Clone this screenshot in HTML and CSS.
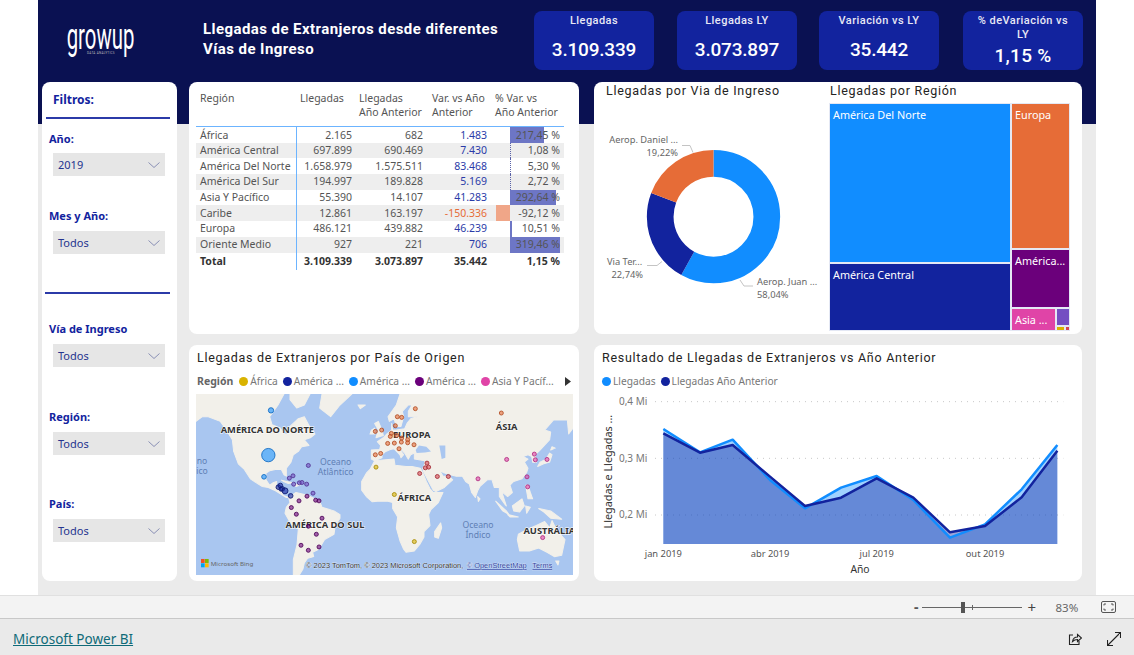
FILE: index.html
```html
<!DOCTYPE html>
<html lang="es">
<head>
<meta charset="utf-8">
<title>Llegadas de Extranjeros</title>
<link rel="stylesheet" href="styles.css">
</head>
<body>
<div class="app">
  <main class="report">
    <header class="top">
      <div class="logo">
        <span class="logo-word">growup</span>
        <span class="logo-sub">DATA ANALYTICS</span>
      </div>
      <h1 class="main-title">Llegadas de Extranjeros desde diferentes<br>Vías de Ingreso</h1>
      <div class="kpis">
        <div class="kpi"><div class="kpi-label">Llegadas</div><div class="kpi-value">3.109.339</div></div>
        <div class="kpi"><div class="kpi-label">Llegadas LY</div><div class="kpi-value">3.073.897</div></div>
        <div class="kpi"><div class="kpi-label">Variación vs LY</div><div class="kpi-value">35.442</div></div>
        <div class="kpi kpi-long"><div class="kpi-label">% deVariación vs LY</div><div class="kpi-value">1,15 %</div></div>
      </div>
    </header>
    <div class="board">
      <aside class="panel filters">
        <div class="f-title">Filtros:</div>
        <div class="f-rule"></div>
        <div class="f-group f-first"><div class="f-label">Año:</div><div class="f-select"><span>2019</span><svg class="chev" viewBox="0 0 12 6"><path d="M.5.5 6 5.5 11.5.5"/></svg></div></div>
        <div class="f-group f-near"><div class="f-label">Mes y Año:</div><div class="f-select"><span>Todos</span><svg class="chev" viewBox="0 0 12 6"><path d="M.5.5 6 5.5 11.5.5"/></svg></div></div>
        <div class="f-rule f-rule2"></div>
        <div class="f-group f-after"><div class="f-label">Vía de Ingreso</div><div class="f-select"><span>Todos</span><svg class="chev" viewBox="0 0 12 6"><path d="M.5.5 6 5.5 11.5.5"/></svg></div></div>
        <div class="f-group f-far"><div class="f-label">Región:</div><div class="f-select"><span>Todos</span><svg class="chev" viewBox="0 0 12 6"><path d="M.5.5 6 5.5 11.5.5"/></svg></div></div>
        <div class="f-group f-far2"><div class="f-label">País:</div><div class="f-select"><span>Todos</span><svg class="chev" viewBox="0 0 12 6"><path d="M.5.5 6 5.5 11.5.5"/></svg></div></div>
      </aside>

      <section class="panel table-panel">
        <table class="data">
          <colgroup><col class="c1"><col class="c2"><col class="c3"><col class="c4"><col class="c5"></colgroup>
          <thead>
            <tr><th class="tl">Región</th><th>Llegadas</th><th>Llegadas<br>Año Anterior</th><th>Var. vs Año<br>Anterior</th><th>% Var. vs<br>Año Anterior</th></tr>
          </thead>
          <tbody>
            <tr><td class="tl">África</td><td>2.165</td><td>682</td><td class="pos">1.483</td><td class="pct"><i class="axis"></i><i class="bar" style="width:34px"></i><span>217,45 %</span></td></tr>
            <tr><td class="tl">América Central</td><td>697.899</td><td>690.469</td><td class="pos">7.430</td><td class="pct"><i class="axis"></i><span>1,08 %</span></td></tr>
            <tr><td class="tl">América Del Norte</td><td>1.658.979</td><td>1.575.511</td><td class="pos">83.468</td><td class="pct"><i class="axis"></i><span>5,30 %</span></td></tr>
            <tr><td class="tl">América Del Sur</td><td>194.997</td><td>189.828</td><td class="pos">5.169</td><td class="pct"><i class="axis"></i><span>2,72 %</span></td></tr>
            <tr><td class="tl">Asia Y Pacífico</td><td>55.390</td><td>14.107</td><td class="pos">41.283</td><td class="pct"><i class="axis"></i><i class="bar" style="width:46px"></i><span>292,64 %</span></td></tr>
            <tr><td class="tl">Caribe</td><td>12.861</td><td>163.197</td><td class="neg">-150.336</td><td class="pct"><i class="bar-neg"></i><span>-92,12 %</span></td></tr>
            <tr><td class="tl">Europa</td><td>486.121</td><td>439.882</td><td class="pos">46.239</td><td class="pct"><i class="axis"></i><i class="bar" style="width:2px"></i><span>10,51 %</span></td></tr>
            <tr><td class="tl">Oriente Medio</td><td>927</td><td>221</td><td class="pos">706</td><td class="pct"><i class="axis"></i><i class="bar" style="width:50px"></i><span>319,46 %</span></td></tr>
          </tbody>
          <tfoot>
            <tr><td class="tl">Total</td><td>3.109.339</td><td>3.073.897</td><td>35.442</td><td>1,15 %</td></tr>
          </tfoot>
        </table>
      </section>

      <section class="panel split-panel">
        <div class="donut-col">
          <h2 class="v-title">Llegadas por Via de Ingreso</h2>
          <svg class="donut" viewBox="594 100 235 234">
            <g class="donut-ring" fill="none" stroke-width="26.7">
              <circle cx="713.5" cy="216.7" r="53.3" pathLength="100" stroke="#118dff" stroke-dasharray="58.04 41.96" transform="rotate(-90 713.5 216.7)"/>
              <circle cx="713.5" cy="216.7" r="53.3" pathLength="100" stroke="#12239e" stroke-dasharray="22.74 77.26" stroke-dashoffset="-58.04" transform="rotate(-90 713.5 216.7)"/>
              <circle cx="713.5" cy="216.7" r="53.3" pathLength="100" stroke="#e66c37" stroke-dasharray="19.22 80.78" stroke-dashoffset="-80.78" transform="rotate(-90 713.5 216.7)"/>
            </g>
            <g fill="none" stroke="#c4c4c4">
              <path d="M682 145.5h8l3 7"/><path d="M647 265.5h10l5-4"/><path d="M740 280l4 6h9"/>
            </g>
            <g class="d-label">
              <text x="678" y="143" text-anchor="end">Aerop. Daniel ...</text>
              <text x="678" y="156" text-anchor="end">19,22%</text>
              <text x="607" y="265">Via Ter...</text>
              <text x="643" y="278" text-anchor="end">22,74%</text>
              <text x="757" y="285">Aerop. Juan ...</text>
              <text x="757" y="298">58,04%</text>
            </g>
          </svg>
        </div>
        <div class="tree-col">
          <h2 class="v-title tree-title">Llegadas por Región</h2>
          <div class="tree">
            <div class="tree-left">
              <div class="t-cell t-blue t-a">América Del Norte</div>
              <div class="t-cell t-navy t-b">América Central</div>
            </div>
            <div class="tree-right">
              <div class="t-cell t-orange t-c">Europa</div>
              <div class="t-cell t-purple t-d">América...</div>
              <div class="tree-bottom">
                <div class="t-cell t-pink t-e">Asia ...</div>
                <div class="tree-tiny">
                  <div class="t-cell t-violet t-f"></div>
                  <div class="tree-tinier"><div class="t-cell t-yellow t-g"></div><div class="t-cell t-red t-h"></div></div>
                </div>
              </div>
            </div>
          </div>
        </div>
      </section>

      <section class="panel map-panel">
        <h2 class="v-title">Llegadas de Extranjeros por País de Origen</h2>
        <div class="legend map-legend">
          <b class="leg-head">Región</b>
          <span class="leg"><i class="dot d-yellow"></i>África</span>
          <span class="leg"><i class="dot d-navy"></i>América ...</span>
          <span class="leg"><i class="dot d-blue"></i>América ...</span>
          <span class="leg"><i class="dot d-purple"></i>América ...</span>
          <span class="leg"><i class="dot d-pink"></i>Asia Y Pacíf...</span>
          <svg class="leg-arrow" viewBox="0 0 6 9"><path d="M0 0l6 4.500-6 4.500z"/></svg>
        </div>
        <svg class="map" viewBox="18 148 1131 542" preserveAspectRatio="none">
          <rect x="18" y="148" width="1131" height="542" fill="#a9c6f0"/>
          <g class="land">
            <path d="M18 148V230L37 216 55 216 91 230 109 256 127 285 131 320 145 357 163 374 181 402 199 414 217 425 235 428 253 436 271 447 289 458 296 458 278 451 278 432 260 428 260 410 249 414 239 421 228 405 228 385 239 378 256 374 274 374 282 390 289 394 289 370 303 352 310 330 325 320 335 306 357 302 343 285 361 279 375 268 361 250 343 216 325 222 300 245 292 268 282 268 271 250 246 240 239 216 264 181 282 148Z"/>
            <path d="M300 148H360L343 181 320 190 300 165Z"/>
            <path d="M396 148 389 190 422 216 450 181 486 148Z"/>
            <path d="M504 181 526 181 511 192Z"/>
            <path d="M274 406 307 414 295 416 282 411Z"/>
            <path d="M314 418 332 420 318 425Z"/>
            <path d="M296 458 318 443 353 451 389 469 396 487 432 498 450 509 450 520 436 542 432 568 404 584 386 613 368 622 371 635 353 640 343 654 339 672 328 690H310V644L321 600 325 552 303 537 285 505 289 487 300 473Z"/>
            <path d="M630 148 619 181 594 216 598 230 612 222 619 245 633 245 641 216 637 200 655 181 666 181 655 200 655 216 684 216 662 222 651 236 644 252 619 256 608 256 605 236 605 256 590 268 580 279 562 291 572 302 569 314 544 316 544 343 554 348 576 339 576 330 587 320 601 314 612 312 630 330 633 339 641 330 623 306 630 310 644 325 655 343 662 330 673 325 673 343 687 345 705 348 702 365 698 370 702 383 716 410 730 436 738 440 763 428 788 405 777 394 759 394 748 374 759 383 781 390 799 394 817 394 827 410 838 418 845 443 856 458 863 438 870 425 892 405 906 405 913 428 928 428 928 455 946 480 949 483 935 440 953 455 967 443 960 421 971 410 996 402 1010 383 1014 370 1003 352 1014 343 999 335 1014 330 1025 335 1028 352 1039 352 1035 330 1050 316 1079 285 1082 262 1064 256 1090 226 1132 226 1136 268 1149 250V148Z"/>
            <path d="M554 348 612 343 615 361 648 365 666 365 691 370 698 383 709 410 720 432 730 443 759 443 745 473 723 494 716 509 720 542 702 560 702 576 691 596 673 618 648 622 641 613 630 588 619 549 623 516 608 491 608 473 594 469 562 469 547 471 529 455 515 436 515 410 529 385 540 374Z"/>
            <path d="M734 560 752 534 755 549 745 580 734 576Z"/>
            <path d="M558 279 580 272 576 256 565 230 554 236 565 256Z"/>
            <path d="M540 268 554 268 554 250 544 256Z"/>
            <path d="M1043 365 1061 357 1079 352 1086 330 1079 325 1068 343 1050 352Z"/>
            <path d="M1082 316 1096 310 1086 306Z"/>
            <path d="M1007 421 1014 421 1021 443 1028 462 1014 462 1010 440Z"/>
            <path d="M967 483 996 462 1003 483 989 501 971 498Z"/>
            <path d="M917 469 949 498 957 509 938 498Z"/>
            <path d="M953 509 985 516 960 516Z"/>
            <path d="M1007 483 1021 487 1010 505Z"/>
            <path d="M1046 491 1082 498 1115 523 1082 520 1061 501Z"/>
            <path d="M863 455 870 462 865 470Z"/>
            <path d="M985 568 1014 552 1039 542 1064 530 1079 549 1086 527 1100 556 1125 584 1115 631 1093 635 1071 622 1046 609 1018 618 989 618 982 584Z"/>
            <path d="M1097 648 1107 648 1104 660Z"/>
          </g>
          <g class="inland">
            <path d="M677 316 687 302 709 306 723 320 705 323 680 325Z"/>
            <path d="M748 302 766 302 766 339 755 343 752 325Z"/>
          </g>
          <g class="map-region">
            <text x="232" y="265">AMÉRICA DO NORTE</text>
            <text x="665" y="280">EUROPA</text>
            <text x="950" y="255">ÁSIA</text>
            <text x="673" y="468">ÁFRICA</text>
            <text x="405" y="548">AMÉRICA DO SUL</text>
            <text x="1078" y="568">AUSTRÁLIA</text>
          </g>
          <g class="map-ocean">
            <text x="437" y="362">Oceano</text>
            <text x="437" y="392">Atlântico</text>
            <text x="864" y="550">Oceano</text>
            <text x="864" y="580">Índico</text>
            <text x="36" y="358">no</text>
            <text x="36" y="388">ico</text>
          </g>
          <g class="pts p-orange">
            <circle cx="676" cy="192" r="6"/><circle cx="622" cy="216" r="6"/><circle cx="635" cy="218" r="6"/><circle cx="616" cy="243" r="6"/><circle cx="556" cy="260" r="6"/><circle cx="575" cy="256" r="6"/><circle cx="604" cy="266" r="6"/><circle cx="601" cy="275" r="6"/><circle cx="620" cy="272" r="6"/><circle cx="635" cy="280" r="6"/><circle cx="653" cy="285" r="6"/><circle cx="634" cy="292" r="6"/><circle cx="653" cy="294" r="6"/><circle cx="593" cy="296" r="6"/><circle cx="613" cy="295" r="6"/><circle cx="672" cy="300" r="6"/><circle cx="627" cy="312" r="6"/><circle cx="556" cy="330" r="6"/><circle cx="572" cy="326" r="6"/><circle cx="934" cy="205" r="6"/>
          </g>
          <g class="pts p-red">
            <circle cx="711" cy="355" r="6"/><circle cx="706" cy="369" r="6"/><circle cx="716" cy="367" r="6"/><circle cx="689" cy="386" r="6"/><circle cx="742" cy="395" r="6"/><circle cx="775" cy="395" r="6"/>
          </g>
          <g class="pts p-pink">
            <circle cx="950" cy="344" r="6"/><circle cx="1033" cy="328" r="6"/><circle cx="1036" cy="345" r="6"/><circle cx="1071" cy="344" r="6"/><circle cx="1011" cy="396" r="6"/><circle cx="1013" cy="426" r="6"/><circle cx="864" cy="402" r="6"/><circle cx="1058" cy="578" r="6"/>
          </g>
          <g class="pts p-yellow">
            <circle cx="558" cy="367" r="6"/><circle cx="613" cy="449" r="6"/><circle cx="673" cy="590" r="6"/>
          </g>
          <g class="pts p-blue">
            <circle cx="243" cy="197" r="8"/><circle cx="235" cy="331" r="20"/><circle cx="222" cy="396" r="7"/>
          </g>
          <g class="pts p-violet">
            <circle cx="355" cy="362" r="6"/><circle cx="298" cy="400" r="6"/><circle cx="309" cy="393" r="6"/><circle cx="311" cy="418" r="6"/><circle cx="328" cy="414" r="6"/><circle cx="336" cy="413" r="6"/><circle cx="350" cy="418" r="6"/><circle cx="369" cy="445" r="6"/>
          </g>
          <g class="pts p-navy">
            <circle cx="265" cy="427" r="7"/><circle cx="271" cy="422" r="7"/><circle cx="277" cy="432" r="7"/><circle cx="285" cy="438" r="9"/><circle cx="302" cy="453" r="7"/><circle cx="273" cy="433" r="6"/>
          </g>
          <g class="pts p-purple">
            <circle cx="351" cy="454" r="6"/><circle cx="327" cy="468" r="6"/><circle cx="377" cy="466" r="6"/><circle cx="387" cy="468" r="6"/><circle cx="304" cy="488" r="6"/><circle cx="319" cy="508" r="6"/><circle cx="396" cy="520" r="6"/><circle cx="355" cy="544" r="6"/><circle cx="379" cy="568" r="6"/><circle cx="333" cy="601" r="6"/><circle cx="387" cy="606" r="6"/><circle cx="355" cy="616" r="6"/>
          </g>
          <g>
            <rect x="33" y="642" width="11" height="12" fill="#f25022"/><rect x="45" y="642" width="11" height="12" fill="#7fba00"/><rect x="33" y="655" width="11" height="12" fill="#00a4ef"/><rect x="45" y="655" width="11" height="12" fill="#ffb900"/>
            <text class="map-bing" x="62" y="662" textLength="128" lengthAdjust="spacingAndGlyphs">Microsoft Bing</text>
            <text class="map-copy" x="348" y="670" textLength="472" lengthAdjust="spacingAndGlyphs">© 2023 TomTom, © 2023 Microsoft Corporation,</text>
            <text class="map-copy map-link" x="830" y="670" textLength="180" lengthAdjust="spacingAndGlyphs">© OpenStreetMap</text>
            <text class="map-copy map-link" x="1027" y="670" textLength="60" lengthAdjust="spacingAndGlyphs">Terms</text>
          </g>
        </svg>
      </section>

      <section class="panel line-panel">
        <h2 class="v-title">Resultado de Llegadas de Extranjeros vs Año Anterior</h2>
        <div class="legend line-legend">
          <span class="leg"><i class="dot d-blue"></i>Llegadas</span>
          <span class="leg"><i class="dot d-navy"></i>Llegadas Año Anterior</span>
        </div>
        <svg class="line-chart" viewBox="0 129 1461 579">
          <g class="grid">
            <path d="M180 170H1405"/><path d="M180 340H1405"/><path d="M180 510H1405"/>
          </g>
          <path fill="#118dff" fill-opacity=".4" d="M205 252 315 322 413 284 525 405 630 490 738 428 845 393 955 465 1065 578 1170 538 1280 433 1387 300V597H205Z"/>
          <path fill="#12239e" fill-opacity=".41" d="M205 265 315 323 413 300 525 395 630 483 738 458 845 400 955 458 1065 562 1170 543 1280 457 1387 317V597H205Z"/>
          <path fill="none" stroke="#118dff" stroke-width="7.500" stroke-linejoin="round" d="M205 252 315 322 413 284 525 405 630 490 738 428 845 393 955 465 1065 578 1170 538 1280 433 1387 300"/>
          <path fill="none" stroke="#12239e" stroke-width="7.500" stroke-linejoin="round" d="M205 265 315 323 413 300 525 395 630 483 738 458 845 400 955 458 1065 562 1170 543 1280 457 1387 317"/>
          <g class="axis-y">
            <text x="157" y="180">0,4 Mi</text><text x="157" y="350">0,3 Mi</text><text x="157" y="520">0,2 Mi</text>
          </g>
          <g class="axis-x">
            <text x="205" y="635">jan 2019</text><text x="525" y="635">abr 2019</text><text x="845" y="635">jul 2019</text><text x="1170" y="635">out 2019</text>
          </g>
          <text class="axis-name" x="795" y="684">Año</text>
          <text class="axis-name axis-title" transform="translate(51 380) rotate(-90)">Llegadas e Llegadas ...</text>
        </svg>
      </section>
    </div>
  </main>

  <div class="zoombar">
    <span class="z-sign">-</span>
    <span class="z-track"><i class="z-tick"></i><i class="z-thumb"></i></span>
    <span class="z-sign z-plus">+</span>
    <span class="z-pct">83%</span>
    <svg class="z-fit" viewBox="0 0 15 12"><rect x=".5" y=".5" width="14" height="11" rx="1.500"/><path d="M3 4.500V3h2M10 3h2v1.500M12 7.500V9h-2M5 9H3V7.500"/></svg>
  </div>

  <footer class="foot">
    <a class="pbi" href="#">Microsoft Power BI</a>
    <div class="foot-icons">
      <svg class="ficon" viewBox="0 0 14 14"><path d="M5 3H1.500v9.500H11V9"/><path d="M4.500 9.500C5 6.500 7 5 9.500 5V2.500L13.500 6 9.500 9.500V7.500C7.500 7.500 6 8 4.500 9.500Z"/></svg>
      <svg class="ficon" viewBox="0 0 14 14"><path d="M.5 13.500 13.500.5M8 .5h5.500V6M.5 8v5.500H6"/></svg>
    </div>
  </footer>
</div>
</body>
</html>
```
FILE: styles.css
```css
* { box-sizing: border-box; }
html, body { margin: 0; height: 100%; overflow: hidden; background: #fff; }
body { font-family: "Noto Sans", "Open Sans", sans-serif; color: #555; }
.app { width: 1134px; height: 655px; display: flex; flex-direction: column; overflow: hidden; }

.report {
  width: 1058px; height: 595px; margin-left: 38px; flex: none;
  background: linear-gradient(#0a1152 0, #0a1152 124px, #ebebeb 124px);
  padding-left: 4px;
}

.top { height: 82px; display: flex; align-items: flex-start; }
.logo { width: 161px; height: 82px; display: flex; flex-direction: column; align-items: center; padding: 23px 43px 0 0; flex: none; }
.logo-word { font: 400 37px/28px "Roboto", sans-serif; height: 28px; color: #fff; transform: scaleX(.55); white-space: nowrap; }
.logo-sub { font: 400 3px/4px "Roboto", sans-serif; color: #bbb; letter-spacing: .3px; white-space: nowrap; }
.main-title { margin: 19px 0 0 0; width: 331px; font: 700 15px/20px "Roboto", sans-serif; color: #fff; letter-spacing: .43px; flex: none; }
.kpis { display: flex; gap: 23px; margin-top: 11px; }
.kpi { width: 120px; height: 59px; background: #12239e; border-radius: 8px; color: #fff; text-align: center; padding-top: 3px; font-family: "Roboto", sans-serif; }
.kpi:nth-child(3) { margin-left: -1px; }
.kpi:nth-child(4) { margin-left: 1px; }
.kpi-label { font-size: 11px; line-height: 14px; font-weight: 500; letter-spacing: .45px; color: #e8e8f5; }
.kpi-value { font-size: 19px; line-height: 24px; font-weight: 500; letter-spacing: -.2px; margin-top: 10px; }
.kpi-long .kpi-label { padding: 0 8px; }
.kpi-long .kpi-value { margin-top: 2px; letter-spacing: .3px; }

.board {
  display: grid;
  grid-template-columns: 135px 390px 491px;
  grid-template-rows: 252px 236px;
  column-gap: 12px;
  row-gap: 11px;
}
.split-panel, .line-panel { margin-left: 3px; }

.panel { background: #fff; border-radius: 8px; min-width: 0; overflow: hidden; }
.filters { grid-row: 1 / 3; padding: 10px 7px 0 3px; display: flex; flex-direction: column; }
.f-title { font: 700 12px/16px "Noto Sans", sans-serif; color: #12239e; padding-left: 8px; }
.f-rule { height: 2px; background: #2b3aa8; margin: 9px 0 0 1px; width: 124px; flex: none; }
.f-rule2 { margin: 38px 0 0 0; width: 125px; }
.f-first { margin-top: 12px; }
.f-near { margin-top: 32px; }
.f-after { margin-top: 27px; }
.f-far { margin-top: 42px; }
.f-far2 { margin-top: 41px; }
.f-label { font: 700 11px/16px "Noto Sans", sans-serif; color: #12239e; padding-left: 4px; margin-bottom: 7px; }
.f-first .f-label { margin-bottom: 6px; }
.f-select { height: 23px; width: 112px; margin-left: 8px; background: #e6e6e6; display: flex; align-items: center; justify-content: space-between; padding: 0 5px; font-size: 11px; color: #25348f; }
.chev { width: 12px; height: 6px; fill: none; stroke: #8a90b5; stroke-width: 1; }

.table-panel { padding: 8px 15px 0 7px; }
.data { border-collapse: collapse; table-layout: fixed; width: 368px; font-size: 10.5px; color: #555; }
.c1 { width: 100px; } .c2 { width: 60px; } .c3 { width: 71px; } .c4 { width: 64px; } .c5 { width: 73px; }
.data th { height: 36px; vertical-align: top; font-weight: 400; line-height: 14px; text-align: left; padding: 1px 0 0 4px; white-space: nowrap; border-bottom: 1px solid #6cb4ff; }
.data th:nth-child(3) { padding-left: 3px; }
.data th:nth-child(4) { padding-left: 5px; }
.data td { height: 15.7px; padding: 0 4px 0 0; text-align: right; line-height: 15px; white-space: nowrap; }
.data td.tl { text-align: left; padding-left: 4px; border-right: 1px solid #6cb4ff; }
.data tbody tr:nth-child(even) td { background: #eeeeee; }
.data tbody tr:first-child td { height: 16.7px; padding-top: 1px; }
.pos { color: #2b3ba8; }
.neg { color: #e66c37; }
.pct { position: relative; }
.pct span { position: relative; }
.axis { position: absolute; left: 19px; top: 0; bottom: 0; border-left: 1px dotted #5a62a8; }
.bar { position: absolute; left: 19px; top: 0; bottom: 0; background: #6d76c5; }
.bar-neg { position: absolute; left: 5px; width: 14px; top: 0; bottom: 0; background: #f0a688; }
.data tfoot td { font-weight: 700; color: #333; height: 17px; }

.split-panel { display: flex; }
.v-title { margin: 0; font: 400 12.5px/16px "Roboto", sans-serif; letter-spacing: .72px; color: #252423; }
.donut-col { width: 235px; flex: none; padding-top: 1px; }
.donut-col .v-title { padding-left: 12px; }
.donut { display: block; width: 235px; height: 234px; margin-top: 1px; }
.d-label { font: 9.3px "Noto Sans", sans-serif; fill: #666; }
.tree-col { width: 241px; flex: none; padding-top: 1px; }
.tree-title { height: 20px; padding-left: 1px; }
.tree { width: 241px; height: 228px; display: flex; }
.tree-left { width: 182px; display: flex; flex-direction: column; }
.tree-right { width: 59px; display: flex; flex-direction: column; }
.t-cell { color: #fff; font-size: 10.8px; line-height: 14px; padding: 4px 3px; border: 1px solid #e4e8f4; overflow: hidden; white-space: nowrap; }
.t-a { height: 160px; } .t-b { height: 68px; }
.t-c { height: 146px; } .t-d { height: 59px; }
.tree-bottom { height: 23px; display: flex; }
.t-e { width: 45px; } .tree-tiny { width: 14px; display: flex; flex-direction: column; }
.t-f { height: 18px; padding: 0; } .tree-tinier { height: 5px; display: flex; }
.t-g { width: 9px; padding: 0; } .t-h { width: 5px; padding: 0; }
.t-blue { background: #118dff; } .t-navy { background: #12239e; } .t-orange { background: #e66c37; }
.t-purple { background: #6b007b; } .t-pink { background: #e044a7; } .t-violet { background: #744ec2; }
.t-yellow { background: #d9b300; } .t-red { background: #d64550; }

.map-panel { padding: 5px 6px 0 7px; }
.map-panel .v-title { padding-left: 1px; }
.line-panel { padding: 5px 0 0 8px; }
.legend { display: flex; align-items: center; font-size: 10.2px; line-height: 14px; color: #777; margin-top: 8px; white-space: nowrap; }
.map-legend { gap: 5px; padding-left: 1px; }
.leg-head { color: #666; font-weight: 700; font-size: 10.5px; margin-right: 1px; }
.leg { display: inline-flex; align-items: center; gap: 2px; }
.dot { width: 9px; height: 9px; border-radius: 50%; display: inline-block; }
.d-yellow { background: #d9b300; } .d-navy { background: #12239e; } .d-blue { background: #118dff; }
.d-purple { background: #6b007b; } .d-pink { background: #e044a7; }
.leg-arrow { width: 6px; height: 9px; fill: #333; margin-left: 6px; flex: none; }
.map { display: block; width: 377px; height: 181px; margin-top: 6px; }
.land path { fill: #f2f0ea; stroke: #f2f0ea; stroke-width: 3px; stroke-linejoin: round; }
.inland path { fill: #a9c6f0; }
.map-region { font: 700 28px "Noto Sans", sans-serif; fill: #333; text-anchor: middle; stroke: #fff; stroke-width: 3px; paint-order: stroke; }
.map-ocean { font: 400 26px "Noto Sans", sans-serif; fill: #5f7fb5; text-anchor: middle; }
.pts circle { stroke-width: 2.500; fill-opacity: .6; }
.p-orange circle { fill: #e66c37; stroke: #b04a20; }
.p-red circle { fill: #d64550; stroke: #a02a35; }
.p-pink circle { fill: #e044a7; stroke: #b02a80; }
.p-yellow circle { fill: #d9b300; stroke: #a58800; }
.p-blue circle { fill: #118dff; stroke: #0a66c0; }
.p-violet circle { fill: #744ec2; stroke: #4f3090; }
.p-navy circle { fill: #12239e; stroke: #0c1870; }
.p-purple circle { fill: #6b007b; stroke: #4a0055; }
.map-bing { font: 18px "Noto Sans", sans-serif; fill: #666; }
.map-copy { font: 21px "Liberation Sans", sans-serif; fill: #333; stroke: #fff; stroke-width: 1px; paint-order: stroke; }
.map-link { fill: #2a3fa0; text-decoration: underline; }

.line-legend { gap: 5px; }
.line-chart { display: block; width: 487px; height: 193px; margin: 0 0 0 -7px; }
.grid path { stroke: #c8c8c8; stroke-width: 3; stroke-dasharray: 3 15; fill: none; }
.axis-y text { font: 30px "Noto Sans", sans-serif; fill: #777; text-anchor: end; }
.axis-x text { font: 28px "Noto Sans", sans-serif; fill: #555; text-anchor: middle; }
.axis-name { font: 31px "Noto Sans", sans-serif; fill: #333; text-anchor: middle; }
.axis-title { font-size: 32.5px; }

.zoombar { height: 24px; flex: none; background: #f3f3f3; border-top: 1px solid #e0e0e0; border-bottom: 1px solid #c8c8c8; display: flex; align-items: center; justify-content: flex-end; padding-right: 18px; color: #555; }
.z-sign { font: 700 14px/14px "Noto Sans", sans-serif; color: #555; }
.z-plus { font-weight: 400; font-size: 15px; margin-left: 5px; color: #444; }
.z-track { position: relative; width: 100px; height: 1px; background: #666; margin-left: 4px; }
.z-thumb { position: absolute; left: 39px; top: -5px; width: 4px; height: 11px; background: #555; }
.z-tick { position: absolute; left: 50px; top: -2px; width: 1px; height: 5px; background: #666; }
.z-pct { font-size: 11.500px; margin-left: 19.5px; color: #666; width: 27px; }
.z-fit { width: 15px; height: 12px; margin-left: 18.5px; fill: none; stroke: #555; stroke-width: 1; }

.foot { flex: 1; background: #eaeaea; display: flex; align-items: center; justify-content: space-between; padding: 3px 13px 0 13px; }
.pbi { font-size: 13.5px; color: #0f6a78; text-decoration: underline; }
.foot-icons { display: flex; gap: 25px; }
.ficon { width: 14px; height: 14px; fill: none; stroke: #222; stroke-width: 1.100; }
```
